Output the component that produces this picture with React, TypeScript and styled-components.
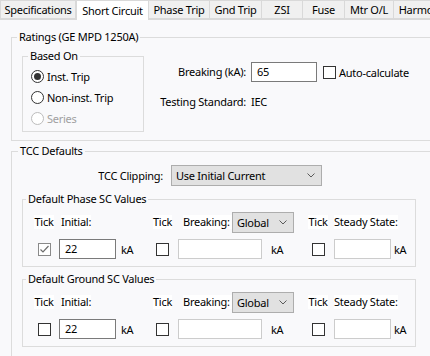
import React from "react";
import styled, { createGlobalStyle } from "styled-components";

const Global = createGlobalStyle`
  html, body {
    margin: 0;
    padding: 0;
    background: #f9f9fb;
  }
  body {
    font-family: "Noto Sans", "Liberation Sans", sans-serif;
    font-size: 11px;
    letter-spacing: -0.25px;
    color: #000;
  }
`;

const Window = styled.div`
  width: 430px;
  height: 356px;
  overflow: hidden;
  display: flex;
  flex-direction: column;
`;

const TabStrip = styled.div`
  display: flex;
  height: 19px;
  border-bottom: 1px solid #d9d9d9;
  flex-shrink: 0;
`;

const Tab = styled.div<{ $w: number; $active?: boolean }>`
  width: ${(p) => p.$w}px;
  flex-shrink: 0;
  box-sizing: border-box;
  height: ${(p) => (p.$active ? 20 : 19)}px;
  border: 1px solid #d9d9d9;
  border-left-width: ${(p) => (p.$active ? 1 : 0)}px;
  border-bottom: ${(p) => (p.$active ? "none" : "1px solid #d9d9d9")};
  background: ${(p) => (p.$active ? "#fff" : "#f0f0f0")};
  text-align: center;
  line-height: ${(p) => (p.$active ? 19 : 17)}px;
  white-space: nowrap;
  overflow: hidden;
  position: relative;
  z-index: ${(p) => (p.$active ? 1 : 0)};
  &:first-child {
    border-left-width: 1px;
  }
`;

const Panel = styled.div`
  flex: 1;
  padding: 10px 0 0 11px;
`;

const GroupBox = styled.fieldset<{ $pad: string; $w?: number }>`
  margin: 0;
  padding: ${(p) => p.$pad};
  border: 1px solid #dcdcdc;
  min-width: 0;
  box-sizing: border-box;
  ${(p) => (p.$w ? `width: ${p.$w}px;` : "")}
`;

const GroupTitle = styled.legend<{ $x: number }>`
  padding: 0 2px;
  margin-left: ${(p) => p.$x}px;
  line-height: 14px;
`;

const GroupInner = styled.div<{ $indent: number }>`
  padding-left: ${(p) => p.$indent}px;
`;

const RatingsBody = styled(GroupInner)`
  display: flex;
  align-items: flex-start;
  gap: 7px;
`;

const RadioRow = styled.div<{ $disabled?: boolean }>`
  display: flex;
  align-items: center;
  height: 21px;
  gap: 3px;
  color: ${(p) => (p.$disabled ? "#a0a0a0" : "#000")};
`;

const RadioCircle = styled.span<{ $on?: boolean; $disabled?: boolean }>`
  width: 13px;
  height: 13px;
  box-sizing: border-box;
  border-radius: 50%;
  border: 1px solid ${(p) => (p.$disabled ? "#bcbcbc" : "#333")};
  background: #fff;
  display: flex;
  align-items: center;
  justify-content: center;
  &::after {
    content: "";
    width: 7px;
    height: 7px;
    border-radius: 50%;
    background: ${(p) => (p.$on ? "#333" : "transparent")};
  }
`;

const FieldGrid = styled.div`
  margin-top: 13px;
  display: grid;
  grid-template-columns: 95px auto;
  column-gap: 5px;
  row-gap: 13px;
  align-items: center;
`;

const FieldLabel = styled.div<{ $left?: boolean }>`
  text-align: ${(p) => (p.$left ? "left" : "right")};
  white-space: nowrap;
  line-height: 14px;
`;

const InlineRow = styled.div`
  display: flex;
  align-items: center;
`;

const TextBox = styled.div<{ $w: number; $empty?: boolean; $ml?: number }>`
  width: ${(p) => p.$w}px;
  height: 20px;
  box-sizing: border-box;
  margin-left: ${(p) => p.$ml ?? 0}px;
  border: 1px solid ${(p) => (p.$empty ? "#cccccc" : "#7a7a7a")};
  background: #fff;
  padding-left: 5px;
  line-height: 18px;
`;

const CheckBox = styled.span<{ $checked?: boolean; $ml?: number }>`
  width: 13px;
  height: 13px;
  box-sizing: border-box;
  margin-left: ${(p) => p.$ml ?? 0}px;
  border: 1px solid ${(p) => (p.$checked ? "#8a8a8a" : "#333")};
  background: #fff;
  display: flex;
  align-items: center;
  justify-content: center;
  justify-self: center;
  flex-shrink: 0;
`;

const CheckText = styled.span`
  margin-left: 3px;
  white-space: nowrap;
`;

const ClipRow = styled(GroupInner)`
  display: flex;
  align-items: center;
  gap: 8px;
  margin-bottom: 6px;
`;

const ClipLabel = styled.div`
  width: 141px;
  text-align: right;
  white-space: nowrap;
`;

const Combo = styled.div<{ $w: number; $h: number }>`
  width: ${(p) => p.$w}px;
  height: ${(p) => p.$h}px;
  box-sizing: border-box;
  border: 1px solid #adadad;
  background: #e1e1e1;
  display: flex;
  align-items: center;
  padding: 0 6px 0 4px;
  flex-shrink: 0;
  span {
    flex: 1;
    white-space: nowrap;
  }
`;

const ScStack = styled(GroupInner)`
  display: flex;
  flex-direction: column;
  gap: 5px;
`;

const ScGrid = styled(GroupInner)`
  display: grid;
  grid-template-columns: 22px 65px 30px 25px 90px 38px 30px 60px 1fr;
  grid-template-rows: 20px 20px;
  row-gap: 7px;
  align-items: center;
`;

const HeadLabel = styled.span<{ $ml?: number; $center?: boolean; $w?: number }>`
  justify-self: ${(p) => (p.$center ? "center" : "start")};
  margin-left: ${(p) => p.$ml ?? 0}px;
  ${(p) => (p.$w ? `width: ${p.$w}px;` : "")}
  background: #fff;
  line-height: 14px;
  white-space: nowrap;
`;

const HeadSpan = styled.div<{ $ml: number }>`
  grid-column: span 2;
  display: flex;
  align-items: center;
  padding-left: ${(p) => p.$ml}px;
`;

const Unit = styled.span<{ $pl: number }>`
  padding-left: ${(p) => p.$pl}px;
`;

const Chevron = () => (
  <svg width="8" height="5" viewBox="0 0 8 5">
    <polyline points="0.5,0.5 4,4 7.5,0.5" fill="none" stroke="#5a5a5a" strokeWidth="1" />
  </svg>
);

const Tick = () => (
  <svg width="11" height="11" viewBox="0 0 11 11">
    <polyline points="1.5,5.5 4,8 9.5,2" fill="none" stroke="#6d6d6d" strokeWidth="1.2" />
  </svg>
);

function ScValues({ title, checked }: { title: string; checked?: boolean }) {
  return (
    <GroupBox $pad="6px 0 7px 0" $w={394}>
      <GroupTitle $x={3}>{title}</GroupTitle>
      <ScGrid $indent={10}>
        <HeadLabel $center>Tick</HeadLabel>
        <HeadLabel $ml={6}>Initial:</HeadLabel>
        <span />
        <HeadLabel $center>Tick</HeadLabel>
        <HeadSpan $ml={8}>
          <HeadLabel $w={49}>Breaking:</HeadLabel>
          <Combo $w={62} $h={21}>
            <span>Global</span>
            <Chevron />
          </Combo>
        </HeadSpan>
        <HeadLabel $center>Tick</HeadLabel>
        <HeadSpan $ml={1}>
          <HeadLabel>Steady State:</HeadLabel>
        </HeadSpan>

        <CheckBox $checked={checked}>{checked && <Tick />}</CheckBox>
        <TextBox $w={57} $ml={4}>22</TextBox>
        <Unit $pl={1}>kA</Unit>
        <CheckBox />
        <TextBox $w={84} $ml={3} $empty />
        <Unit $pl={6}>kA</Unit>
        <CheckBox />
        <TextBox $w={57} $ml={1} $empty />
        <Unit $pl={1}>kA</Unit>
      </ScGrid>
    </GroupBox>
  );
}

const tabs: [string, number][] = [
  ["Specifications", 76],
  ["Short Circuit", 73],
  ["Phase Trip", 61],
  ["Gnd Trip", 52],
  ["ZSI", 41],
  ["Fuse", 42],
  ["Mtr O/L", 49],
  ["Harmonics", 64],
];

export default function App() {
  return (
    <Window>
      <Global />
      <TabStrip>
        {tabs.map(([name, w]) => (
          <Tab key={name} $w={w} $active={name === "Short Circuit"}>
            {name}
          </Tab>
        ))}
      </TabStrip>
      <Panel>
        <GroupBox $pad="5px 0 8px 0" $w={440}>
          <GroupTitle $x={5}>Ratings (GE MPD 1250A)</GroupTitle>
          <RatingsBody $indent={10}>
            <GroupBox $pad="3px 0 2px 0" $w={122}>
              <GroupTitle $x={5}>Based On</GroupTitle>
              <GroupInner $indent={8}>
                <RadioRow>
                  <RadioCircle $on />
                  Inst. Trip
                </RadioRow>
                <RadioRow>
                  <RadioCircle />
                  Non-inst. Trip
                </RadioRow>
                <RadioRow $disabled>
                  <RadioCircle $disabled />
                  Series
                </RadioRow>
              </GroupInner>
            </GroupBox>
            <FieldGrid>
              <FieldLabel>Breaking (kA):</FieldLabel>
              <InlineRow>
                <TextBox $w={66}>65</TextBox>
                <CheckBox $ml={6} />
                <CheckText>Auto-calculate</CheckText>
              </InlineRow>
              <FieldLabel>Testing Standard:</FieldLabel>
              <FieldLabel $left>IEC</FieldLabel>
            </FieldGrid>
          </RatingsBody>
        </GroupBox>
        <GroupBox $pad="7px 0 0 0" $w={440} style={{ marginTop: 3, height: 260 }}>
          <GroupTitle $x={6}>TCC Defaults</GroupTitle>
          <ClipRow $indent={10}>
            <ClipLabel>TCC Clipping:</ClipLabel>
            <Combo $w={151} $h={21}>
              <span>Use Initial Current</span>
              <Chevron />
            </Combo>
          </ClipRow>
          <ScStack $indent={10}>
            <ScValues title="Default Phase SC Values" checked />
            <ScValues title="Default Ground SC Values" />
          </ScStack>
        </GroupBox>
      </Panel>
    </Window>
  );
}
